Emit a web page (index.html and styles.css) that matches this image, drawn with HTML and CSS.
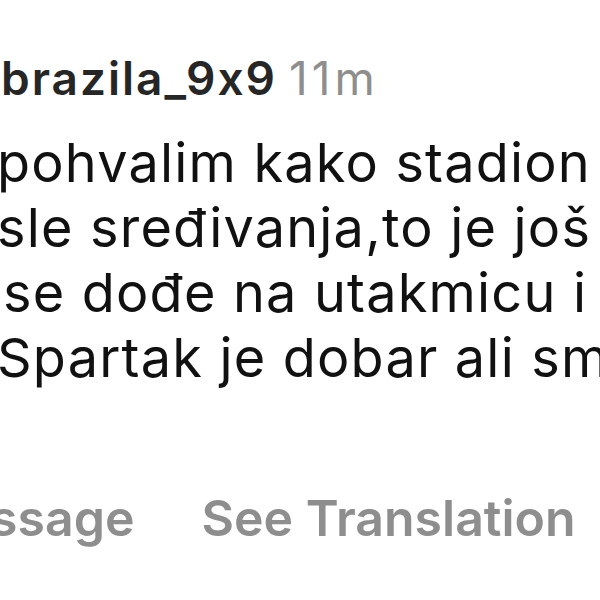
FILE: index.html
```html
<!DOCTYPE html>
<html lang="en">
<head>
  <meta charset="UTF-8" />
  <title>Comment</title>
  <link rel="stylesheet" href="styles.css">
</head>
<body>
  <div class="comment">
    <div class="meta">
      <span class="user">brazila_9x9</span>
      <span class="time">11m</span>
    </div>
    <div class="text">
      <div class="line">pohvalim kako stadion s</div>
      <div class="line">sle sređivanja,to je još j</div>
      <div class="line line-3">se dođe na utakmicu i</div>
      <div class="line">Spartak je dobar ali sm</div>
    </div>
    <div class="actions">
      <span class="msg">ssage</span>
      <span>See Translation</span>
    </div>
  </div>
</body>
</html>
```

FILE: styles.css
```css
body {
  margin: 0;
  background-color: #fff;
  font-family: Inter, 'Noto Sans', sans-serif;
  font-feature-settings: "calt" 0;
  overflow: hidden;
}
.comment {
  width: 600px;
  padding-top: 50px;
}
.meta {
  display: flex;
  gap: 12px;
  font-size: 46px;
  line-height: 56px;
  padding-left: 1px;
}
.user {
  font-weight: 600;
  letter-spacing: 2px;
  color: #262626;
}
.time {
  color: #8e8e8e;
  letter-spacing: 4px;
}
.text {
  margin: 24px 0 0 -3px;
  font-size: 54px;
  line-height: 65px;
  letter-spacing: 1.2px;
  color: #111;
}
.line {
  white-space: nowrap;
}
.line-3 {
  padding-left: 6px;
}
.actions {
  display: flex;
  gap: 67px;
  margin-top: 98px;
  font-size: 50px;
  font-weight: 600;
  color: #8e8e8e;
  white-space: nowrap;
}
.msg {
  margin-left: -10px;
}
```
